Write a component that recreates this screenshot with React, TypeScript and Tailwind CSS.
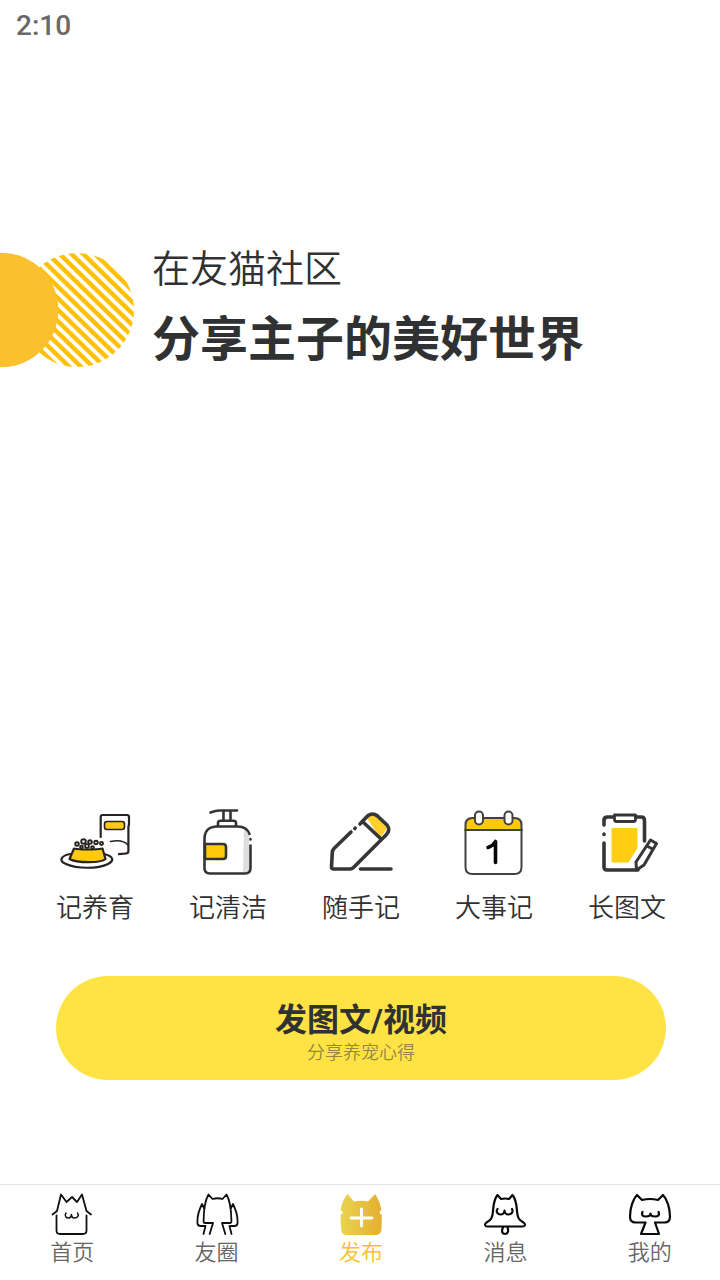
import type { ReactNode } from "react";

function Bubbles() {
  const lines = Array.from({ length: 16 }, (_, i) => 147.5 + i * 11.5);
  return (
    <svg className="block h-[116px] w-[136px] shrink-0" viewBox="0 252 136 116">
      <defs>
        <clipPath id="round">
          <circle cx="77" cy="310" r="57" />
        </clipPath>
      </defs>
      <g clipPath="url(#round)" stroke="#fec107" strokeWidth="4.5">
        {lines.map((y) => (
          <path key={y} d={`M0 ${y + 2}L140 ${y + 139}`} />
        ))}
      </g>
      <circle cx="1" cy="310" r="57.3" fill="#fbc02d" />
    </svg>
  );
}

function FoodIcon() {
  return (
    <svg className="h-20 w-[100px] shrink-0" viewBox="-5 0 100 80" fill="none" stroke="#282320" strokeWidth="2.200" strokeLinecap="round" strokeLinejoin="round">
      <path d="M50.700 37V17q0-2 2-2H77q2 0 2 2v7l-.6 3v24q0 2.500-2.500 2.500L69 54.200" />
      <path d="M60.500 41.500c7-1.500 14-.5 17.500 3.500" strokeWidth="1.600" />
      <rect x="54.500" y="21.500" width="20" height="8" rx="2.500" fill="#ffca0b" strokeWidth="1.600" />
      <path d="M20 54c-11 2.500-10.500 7.500-4 10 11 5 32 5 42 0 7-3.500 5-8-4-10" fill="#fff" />
      <g strokeWidth="1.900">
        <circle cx="33.500" cy="41.500" r="2.300" />
        <circle cx="40" cy="42" r="1.800" />
        <circle cx="46" cy="42.500" r="1.800" />
        <circle cx="51.500" cy="43.500" r="1.500" />
        <circle cx="27" cy="44" r="1.800" />
        <circle cx="31.500" cy="47" r="1.400" />
        <circle cx="37" cy="46" r="1.900" />
        <circle cx="42.500" cy="47.500" r="1.400" />
      </g>
      <path d="M24 48.500c6 1.300 22 1.300 28.500 0L55.500 59q-3.500 3.200-17 3.200T19.500 59z" fill="#ffca0b" />
    </svg>
  );
}

function CleanIcon() {
  return (
    <svg className="h-20 w-20 shrink-0" viewBox="-1 0 80 80" fill="none" stroke="#333436" strokeWidth="2.600" strokeLinecap="round" strokeLinejoin="round">
      <path d="M55 30c4 2 5 5 5 11v28q0 3-3 3h-3z" fill="#dedede" stroke="none" />
      <path d="M21.500 12.500q5-2 9-2H48M34.500 11v9M41.500 11v9" />
      <path d="M29 26v-3q0-2.300 2.300-2.300h13.400q2.300 0 2.300 2.300v3" />
      <path d="M60.500 34c-2-5-6-7.500-11.500-7.500H28c-8 0-12.500 4.500-12.500 12.500v29q0 5.500 5.500 5.500h35q5.500 0 5.500-5.500V45.500M61.500 39v.5" />
      <path d="M16 44h18q3 0 3 3v9q0 3-3 3H16z" fill="#ffca0b" />
    </svg>
  );
}

function PenIcon() {
  return (
    <svg className="h-20 w-20 shrink-0" viewBox="1 0 80 80" fill="none" stroke="#353638" strokeWidth="3.600" strokeLinecap="round" strokeLinejoin="round">
      <path d="M47 18l5-3q4 0 6 2l7 7q2 3 1 6l-6 8z" fill="#ffd02b" stroke="none" />
      <path d="M31 32L14 48.500q-1.500 1.500-1.700 4L11.500 67q0 2 2 2H30q2 0 3.500-1.500L66 35q5-5 1-10L57.500 16q-5-4-10 0L40 24M42.500 21.500L60 38M34.800 28.500l.4-.4M40.500 69H71" />
    </svg>
  );
}

function CalendarIcon() {
  return (
    <svg className="h-20 w-20 shrink-0" viewBox="-1 0 80 80" fill="none" stroke="#404142" strokeWidth="2">
      <path d="M10.500 30v-5q0-7 7-7h42q7 0 7 7v5z" fill="#ffca0b" />
      <path d="M10.500 30v37q0 7 7 7h42q7 0 7-7V30z" fill="#fff" />
      <rect x="20" y="11.500" width="8" height="13" rx="4" fill="#fff" />
      <rect x="49.500" y="11.500" width="8" height="13" rx="4" fill="#fff" />
      <path d="M33 47.500q5-1.500 7.500-6v21" stroke="#050505" strokeWidth="3.600" strokeLinecap="round" strokeLinejoin="round" />
    </svg>
  );
}

function ArticleIcon() {
  return (
    <svg className="h-20 w-20 shrink-0" viewBox="-3 0 80 80" fill="none" stroke="#353638" strokeWidth="3.600" strokeLinecap="round" strokeLinejoin="round">
      <path d="M23 28h23q1.500 0 1.500 1.500V48l-9 14.500H23q-1.500 0-1.500-1.500V29.500Q21.500 28 23 28z" fill="#ffcd12" stroke="none" />
      <path d="M14 25v-4.500q0-3.500 3.500-3.500H23m23 0h5q3.500 0 3.500 3.500V41M14 34v.5M14 43v24q0 3 3 3h31" />
      <path d="M24.500 15h21v4.500q0 2-2 2h-17q-2 0-2-2z" strokeWidth="2.800" />
      <path d="M60.500 40l6 3.500L54 65l-7.500 5-.5-8zM57 46l5.500 3" strokeWidth="3" />
    </svg>
  );
}

function HomeIcon() {
  return (
    <svg className="h-11 w-11" viewBox="0 0 44 44" fill="none" stroke="#101010" strokeWidth="1.800" strokeLinecap="round" strokeLinejoin="round">
      <path d="M2.500 22.500L7 19l4-16.500 5.500 7.500 5.500-5 5 5 5-7.500L36.500 19l4.500 3.500M6.500 23.500v15q0 3.500 3.500 3.500h23q3.500 0 3.500-3.500v-15" />
      <path d="M16 21c-2 3 .5 5.500 3 5 2-.5 2.500-2 2.500-3.500 0 2 1 3.500 3 3.500 3 0 5-2.500 3-5" strokeWidth="1.500" />
    </svg>
  );
}

function CircleIcon() {
  return (
    <svg className="h-11 w-11" viewBox="0 0 44 44" fill="none" stroke="#101010" strokeWidth="1.800" strokeLinecap="round" strokeLinejoin="round">
      <path d="M18 31h-8q-1.500 0-1.400-2C8.700 20 9 10 13.500 2.500l4 4.500q5-1.500 10 0l4-4.500C36 10 36.300 20 36.400 29q.1 2-1.400 2h-8M18 31l-3.300 11M27 31L30.300 42" />
      <path d="M9 16l-2-4c-3 6-5 13-4.500 19.500Q3 34 5.500 34h5L8.500 42M36 16l2-4c3 6 5 13 4.500 19.500Q42 34 39.500 34h-5l2 8" />
    </svg>
  );
}

function PublishIcon() {
  return (
    <svg className="h-11 w-11" viewBox="0 0 44 44">
      <defs>
        <linearGradient id="gold" x1="0" x2="1">
          <stop stopColor="#ead34f" />
          <stop offset="1" stopColor="#e5af30" />
        </linearGradient>
      </defs>
      <path d="M2 16C3 11 5 6 8.500 2L15 9.500q7-1.500 14 0L36 2c3 4 5 9 6 14l.3 2.500-1.500.5v3l2 .5-.3 14.500q-.5 6-6 6H8q-5.500 0-6-6L1.500 22.500l2-.5v-3l-2-.5z" fill="url(#gold)" />
      <path d="M22.500 17v17M12 26h21" stroke="#fff" strokeWidth="2.900" strokeLinecap="round" />
    </svg>
  );
}

function BellIcon() {
  return (
    <svg className="h-11 w-11" viewBox="0 0 44 44" fill="none" stroke="#090909" strokeWidth="2.200" strokeLinecap="round" strokeLinejoin="round">
      <path d="M14.500 3l3.500 4q4-1 8 0l3.500-4c4 5 4 10 4.500 16 .5 7 2 9 6.500 11.500 2.500 2 1.500 4-1 4h-35c-2.500 0-3.500-2-1-4C8 28 9.500 26 10 19c.5-6 .5-11 4.500-16z" />
      <path d="M14.500 17c-2 3 .5 5.500 3 5.500 2.500 0 4-2 4-4 0 2 1.500 4 4 4 3 0 5-2.500 3.500-5.500M20 35.500c-2 4-.5 6.500 2 6.500s4-2.500 2.500-6.500" />
    </svg>
  );
}

function MineIcon() {
  return (
    <svg className="h-11 w-11" viewBox="0 0 44 44" fill="none" stroke="#090909" strokeWidth="2.200" strokeLinecap="round" strokeLinejoin="round">
      <path d="M17.500 30.500H7.500Q2 30.500 2 24.500C2 16 5 7 9 3l5 5q8-2 16 0l5-5c4 4 7 13 7 21.500q0 6-5.500 6h-9.500M17.500 30.500L13 42h18L27 30.500" />
      <path d="M14.500 20c-1.500 4 1 4.500 3.500 4.500 3 0 4.500-1 4.500-3 0 2 1.500 3 4.500 3 2.500 0 5-.5 3.500-4.500" />
    </svg>
  );
}

const notes: { label: string; icon: ReactNode }[] = [
  { label: "记养育", icon: <FoodIcon /> },
  { label: "记清洁", icon: <CleanIcon /> },
  { label: "随手记", icon: <PenIcon /> },
  { label: "大事记", icon: <CalendarIcon /> },
  { label: "长图文", icon: <ArticleIcon /> },
];

const tabs: { label: string; icon: ReactNode; active?: boolean }[] = [
  { label: "首页", icon: <HomeIcon /> },
  { label: "友圈", icon: <CircleIcon /> },
  { label: "发布", icon: <PublishIcon />, active: true },
  { label: "消息", icon: <BellIcon /> },
  { label: "我的", icon: <MineIcon /> },
];

export default function App() {
  return (
    <div className="flex h-[1280px] w-[720px] flex-col overflow-hidden bg-white font-['Noto_Sans_CJK_SC',sans-serif] text-[#303133]">
      <header className="h-[252px] shrink-0 px-4 pt-2 font-[Roboto,sans-serif] text-[28px] leading-[35px] font-medium text-[#696969]">
        2:10
      </header>

      <section className="flex h-[116px] shrink-0 items-center">
        <Bubbles />
        <div className="mb-[9px] ml-4">
          <p className="text-[38px] leading-[58px] font-[350]">在友猫社区</p>
          <h1 className="text-[48px] leading-[80px] font-bold">分享主子的美好世界</h1>
        </div>
      </section>

      <main className="mt-auto pr-[54px] pl-14">
        <div className="flex justify-between">
          {notes.map((item) => (
            <button key={item.label} className="flex w-[78px] flex-col items-center">
              {item.icon}
              <span className="mt-1.5 text-[26px] leading-10 font-[350] whitespace-nowrap">{item.label}</span>
            </button>
          ))}
        </div>
        <button className="mt-[50px] flex h-[104px] w-full flex-col items-center justify-center rounded-full bg-[#ffe344] pt-[3px]">
          <span className="text-[32px] leading-10 font-bold">
            发图文<span className="font-[Roboto,sans-serif]">/</span>视频
          </span>
          <span className="-mt-px text-[18px] leading-6 font-[350] text-[#958744]">分享养宠心得</span>
        </button>
      </main>

      <nav className="mt-[104px] flex h-24 w-[722px] shrink-0 border-t border-[#dfe2ea]">
        {tabs.map((tab) => (
          <button key={tab.label} className="flex flex-1 flex-col items-center pt-[7px]">
            {tab.icon}
            <span className={`text-[22px] leading-7 font-[350] ${tab.active ? "text-[#fbc02d]" : "text-[#666666]"}`}>
              {tab.label}
            </span>
          </button>
        ))}
      </nav>
    </div>
  );
}
